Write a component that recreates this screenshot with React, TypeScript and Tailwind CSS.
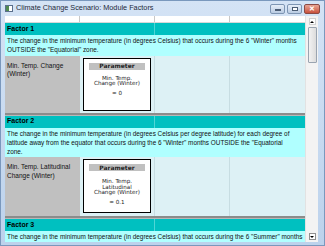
import React from "react";

const FONT = { fontFamily: '"Liberation Sans", Arial, sans-serif' };
const BOX_FONT = { fontFamily: '"DejaVu Sans", Verdana, sans-serif' };

interface Factor {
  title: string;
  desc: string[];
  label: string;
  param: string[];
  value: string;
  rowH: string;
  boxH: string;
  gap: string;
}

// lines are kept as the grid wraps them in the original
const FACTORS: Factor[] = [
  {
    title: "Factor 1",
    desc: [
      'The change in the minimum temperature (in degrees Celsius) that occurs during the 6 "Winter" months',
      'OUTSIDE the "Equatorial" zone.',
    ],
    label: "Min. Temp. Change (Winter)",
    param: ["Min. Temp.", "Change (Winter)"],
    value: "= 0",
    rowH: "h-[57px]",
    boxH: "h-[53px]",
    gap: "mt-[6px]",
  },
  {
    title: "Factor 2",
    desc: [
      "The change in the minimum temperature (in degrees Celsius per degree latitude) for each degree of",
      'latitude away from the equator that occurs during the 6 "Winter" months OUTSIDE the "Equatorial',
      "zone.",
    ],
    label: "Min. Temp. Latitudinal Change (Winter)",
    param: ["Min. Temp.", "Latitudinal", "Change (Winter)"],
    value: "= 0.1",
    rowH: "h-[59px]",
    boxH: "h-[54px]",
    gap: "mt-[8px]",
  },
  {
    title: "Factor 3",
    desc: [
      'The change in the minimum temperature (in degrees Celsius) that occurs during the 6 "Summer" months',
      'OUTSIDE the "Equatorial" zone.',
    ],
    label: "Min. Temp. Change (Summer)",
    param: ["Min. Temp.", "Change (Summer)"],
    value: "= 0",
    rowH: "h-[57px]",
    boxH: "h-[53px]",
    gap: "mt-[6px]",
  },
];

function ParamBox({ f }: { f: Factor }) {
  return (
    <div className={`mx-[3px] mt-[2px] ${f.boxH} border border-black bg-white flex flex-col`} style={BOX_FONT}>
      <div className="mx-[5px] mt-[4px] h-[7px] bg-[#c0c0c0] flex items-center justify-center text-[6px] font-bold leading-none text-[#222]">
        Parameter
      </div>
      <div className={`${f.gap} text-center text-[5.6px] leading-[5.2px] text-[#222]`}>
        {f.param.map((p) => (
          <div key={p}>{p}</div>
        ))}
        <div className="mt-[4.5px]">{f.value}</div>
      </div>
    </div>
  );
}

function FactorBlock({ f, last }: { f: Factor; last?: boolean }) {
  return (
    <div>
      <div className="h-[12px] flex bg-[#00c0c0]">
        <div className="w-[150px] border-r border-[#4fd6d6] pl-[2px] flex items-center text-[7px] font-bold text-black">{f.title}</div>
        <div className="flex-1" />
      </div>
      <div className="bg-[#b0ffff] px-[2px] py-px text-[6.4px] leading-[9.3px] text-[#111] overflow-hidden">
        {f.desc.map((l, i) => (
          <div key={i} className="whitespace-nowrap">{l}</div>
        ))}
      </div>
      <div className={`${f.rowH} flex bg-[#ddf1f5]`}>
        <div className="w-[75px] bg-[#c0c0c0] pl-[2px] pr-[2px] pt-[6px] text-[6.5px] leading-[8.6px] text-[#111]">{f.label}</div>
        <div className="w-[75px] border-r border-[#c7dde2]">
          <ParamBox f={f} />
        </div>
        <div className="w-[75px] border-r border-[#c7dde2]" />
        <div className="flex-1" />
      </div>
      {!last && (
        <div className="h-[3px] bg-[#8c8c8c] border-b border-[#b8b8b8]" />
      )}
    </div>
  );
}

function WinButton({ kind }: { kind: "min" | "max" | "close" }) {
  if (kind === "close") {
    return (
      <div className="w-[16px] h-[10px] rounded-[2px] border border-[#8a4a45] bg-gradient-to-b from-[#e8a493] to-[#c7503c] flex items-center justify-center">
        <span className="text-white text-[7px] font-bold leading-none">✕</span>
      </div>
    );
  }
  return (
    <div className="w-[15px] h-[10px] rounded-[2px] border border-[#7d95b3] bg-gradient-to-b from-[#e6eef8] to-[#b9cbe2] flex items-center justify-center">
      {kind === "min" ? (
        <div className="w-[6px] h-[2px] mt-[2px] border border-[#4b5d75] bg-white" />
      ) : (
        <div className="w-[6px] h-[4px] border border-[#4b5d75] bg-white" />
      )}
    </div>
  );
}

export default function App() {
  return (
    <div
      className="w-[325px] h-[246px] overflow-hidden bg-gradient-to-b from-[#d4e3f5] to-[#bcd2ec] border border-[#7a98bd] flex flex-col"
      style={FONT}
    >
      {/* title bar */}
      <div className="h-[15px] flex items-center pl-[4px] pr-[4px]">
        <div className="w-[8px] h-[7px] border border-[#5a6f8c] bg-white flex">
          <div className="w-[3px] bg-[#4f8a4f]" />
        </div>
        <span className="ml-[3px] text-[7.3px] text-[#1e2a3a]">Climate Change Scenario: Module Factors</span>
        <div className="ml-auto flex gap-[2px] items-center">
          <WinButton kind="min" />
          <WinButton kind="max" />
          <WinButton kind="close" />
        </div>
      </div>
      {/* client area */}
      <div className="flex h-[226px] ml-[4px] mr-[6px]">
        <div className="w-[300px] bg-white overflow-hidden">
          <div className="h-[7px] flex border-b border-[#d8d8d8]">
            <div className="w-[75px] border-r border-[#c8c8c8]" />
            <div className="w-[75px] border-r border-[#c8c8c8]" />
            <div className="w-[75px] border-r border-[#c8c8c8]" />
            <div className="flex-1" />
          </div>
          {FACTORS.map((f, i) => (
            <FactorBlock key={f.title} f={f} last={i === FACTORS.length - 1} />
          ))}
        </div>
        {/* scrollbar */}
        <div className="w-[13px] bg-[#f3f3f3] border-l border-[#e2e2e2] flex flex-col items-center">
          <div className="w-[7px] h-[7px] mt-[2px] bg-white border border-[#d0d0d0] flex items-center justify-center">
            <div className="w-0 h-0 border-l-[2px] border-r-[2px] border-b-[2px] border-l-transparent border-r-transparent border-b-black" />
          </div>
          <div className="w-[9px] h-[36px] mt-[2px] rounded-[1px] border border-[#9aa4b0] bg-gradient-to-r from-[#f2f2f2] to-[#dcdcdc]" />
          <div className="w-[7px] h-[7px] mt-auto mb-[2px] bg-white border border-[#909090] flex items-center justify-center">
            <div className="w-0 h-0 border-l-[2px] border-r-[2px] border-t-[2px] border-l-transparent border-r-transparent border-t-black" />
          </div>
        </div>
      </div>
    </div>
  );
}
